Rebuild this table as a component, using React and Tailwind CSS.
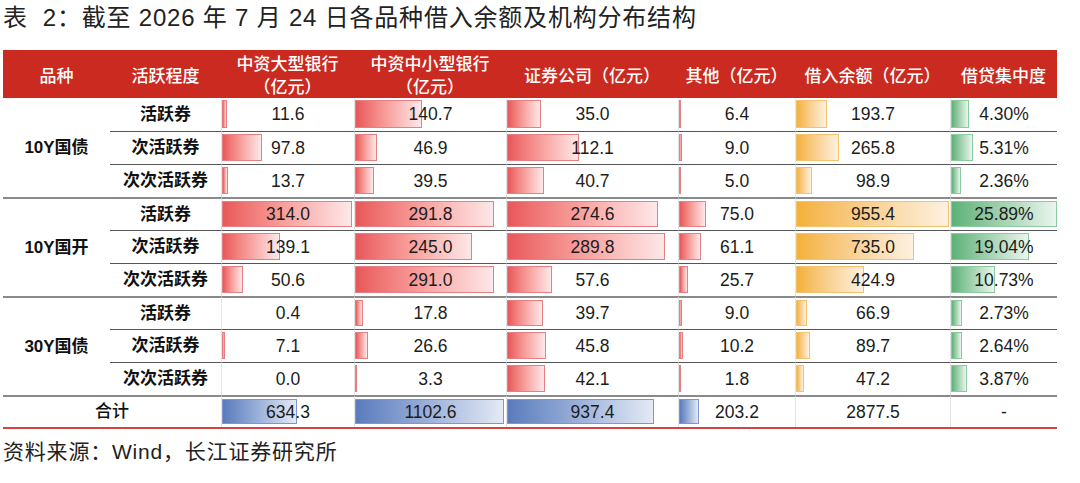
const FONT = "font-['Liberation_Sans','Noto_Sans_CJK_SC',sans-serif]"

const BAR = {
  red: 'border-[#E57F81] from-[#E8575A] to-[#FCE8E9]',
  orange: 'border-[#F2C36F] from-[#F4B136] to-[#FDF1DF]',
  green: 'border-[#8CCB9F] from-[#5CB178] to-[#EAF5EE]',
  blue: 'border-[#7E97CB] from-[#5A7BBC] to-[#E4EAF5]',
}

// bar length per column, fitted to the data-bar scale of each column
const scales = [
  { color: 'red', w: (v) => v * 0.414 },
  { color: 'red', w: (v) => v * 0.476 },
  { color: 'red', w: (v) => 17.2 + v * 0.486 },
  { color: 'red', w: (v) => v * 0.36 },
  { color: 'orange', w: (v) => v * 0.16 },
  { color: 'green', w: (v) => v * 4.1 },
]

const groups = [
  {
    name: '10Y国债',
    rows: [
      ['活跃券', 11.6, 140.7, 35.0, 6.4, 193.7, 4.3],
      ['次活跃券', 97.8, 46.9, 112.1, 9.0, 265.8, 5.31],
      ['次次活跃券', 13.7, 39.5, 40.7, 5.0, 98.9, 2.36],
    ],
  },
  {
    name: '10Y国开',
    rows: [
      ['活跃券', 314.0, 291.8, 274.6, 75.0, 955.4, 25.89],
      ['次活跃券', 139.1, 245.0, 289.8, 61.1, 735.0, 19.04],
      ['次次活跃券', 50.6, 291.0, 57.6, 25.7, 424.9, 10.73],
    ],
  },
  {
    name: '30Y国债',
    rows: [
      ['活跃券', 0.4, 17.8, 39.7, 9.0, 66.9, 2.73],
      ['次活跃券', 7.1, 26.6, 45.8, 10.2, 89.7, 2.64],
      ['次次活跃券', 0.0, 3.3, 42.1, 1.8, 47.2, 3.87],
    ],
  },
]

const totals = [
  { text: '634.3', width: 75 },
  { text: '1102.6', width: 149 },
  { text: '937.4', width: 147 },
  { text: '203.2', width: 20 },
  { text: '2877.5', width: 0 },
  { text: '-', width: 0 },
]

const Bar = ({ width, color }) => {
  if (width < 0.5) return null
  return (
    <div
      className={`absolute left-0 top-[2px] bottom-[3px] border bg-linear-to-r ${BAR[color]}`}
      style={{ width: Math.max(width, 1.5) }}
    />
  )
}

const ValueCell = ({ text, width, color, top }) => (
  <div className={`relative flex items-center justify-center border-l border-[#e4e4e4] ${top}`}>
    <Bar width={width} color={color} />
    <span className="relative text-[17.5px] text-[#1c1c1c]">{text}</span>
  </div>
)

const headers = [
  ['品种'],
  ['活跃程度'],
  ['中资大型银行', '（亿元）'],
  ['中资中小型银行', '（亿元）'],
  ['证券公司（亿元）'],
  ['其他（亿元）'],
  ['借入余额（亿元）'],
  ['借贷集中度'],
]

export default function App() {
  return (
    <div className={`w-[1080px] h-[483px] bg-white ${FONT}`}>
      <div className="pl-[3px] pt-[2px] text-[24px] leading-[32px] text-[#222] tracking-[0.8px] whitespace-pre">
        表  2：截至 2026 年 7 月 24 日各品种借入余额及机构分布结构
      </div>

      <div className="ml-[3px] mt-[16px] w-[1054px] grid grid-cols-[107px_111px_133px_152px_172px_117px_155px_107px] grid-rows-[48px_repeat(9,33px)_32px] border-b-2 border-[#D24545]">
        {headers.map((h, i) => (
          <div
            key={i}
            className="flex flex-col items-center justify-center pt-[4px] bg-[#CB2A20] text-white text-[17px] leading-[23px] font-medium"
          >
            {h.map((line) => (
              <span key={line}>{line}</span>
            ))}
          </div>
        ))}

        {groups.map((g, gi) =>
          g.rows.map((row, ri) => {
            const top =
              ri === 0
                ? gi === 0
                  ? ''
                  : 'border-t-2 border-t-[#8a8a8a]'
                : 'border-t border-t-[#555]'
            return [
              ri === 0 && (
                <div
                  key={`g${gi}`}
                  className={`row-span-3 flex items-center justify-center text-[17px] font-bold text-[#111] ${
                    gi === 0 ? '' : 'border-t-2 border-t-[#8a8a8a]'
                  }`}
                >
                  {g.name}
                </div>
              ),
              <div
                key={`l${gi}${ri}`}
                className={`flex items-center justify-center text-[17px] font-bold text-[#111] ${top}`}
              >
                {row[0]}
              </div>,
              ...row.slice(1).map((v, ci) => (
                <ValueCell
                  key={`v${gi}${ri}${ci}`}
                  text={ci === 5 ? `${v.toFixed(2)}%` : v.toFixed(1)}
                  width={scales[ci].w(v)}
                  color={scales[ci].color}
                  top={top}
                />
              )),
            ]
          })
        )}

        <div className="col-span-2 flex items-center justify-center text-[17px] font-medium text-[#111] border-t-2 border-t-[#8a8a8a]">
          合计
        </div>
        {totals.map((t, i) => (
          <ValueCell
            key={`t${i}`}
            text={t.text}
            width={t.width}
            color="blue"
            top="border-t-2 border-t-[#8a8a8a]"
          />
        ))}
      </div>

      <div className="pl-[3px] mt-[8px] text-[21px] leading-[30px] text-[#222] tracking-[0.8px]">
        资料来源：Wind，长江证券研究所
      </div>
    </div>
  )
}
